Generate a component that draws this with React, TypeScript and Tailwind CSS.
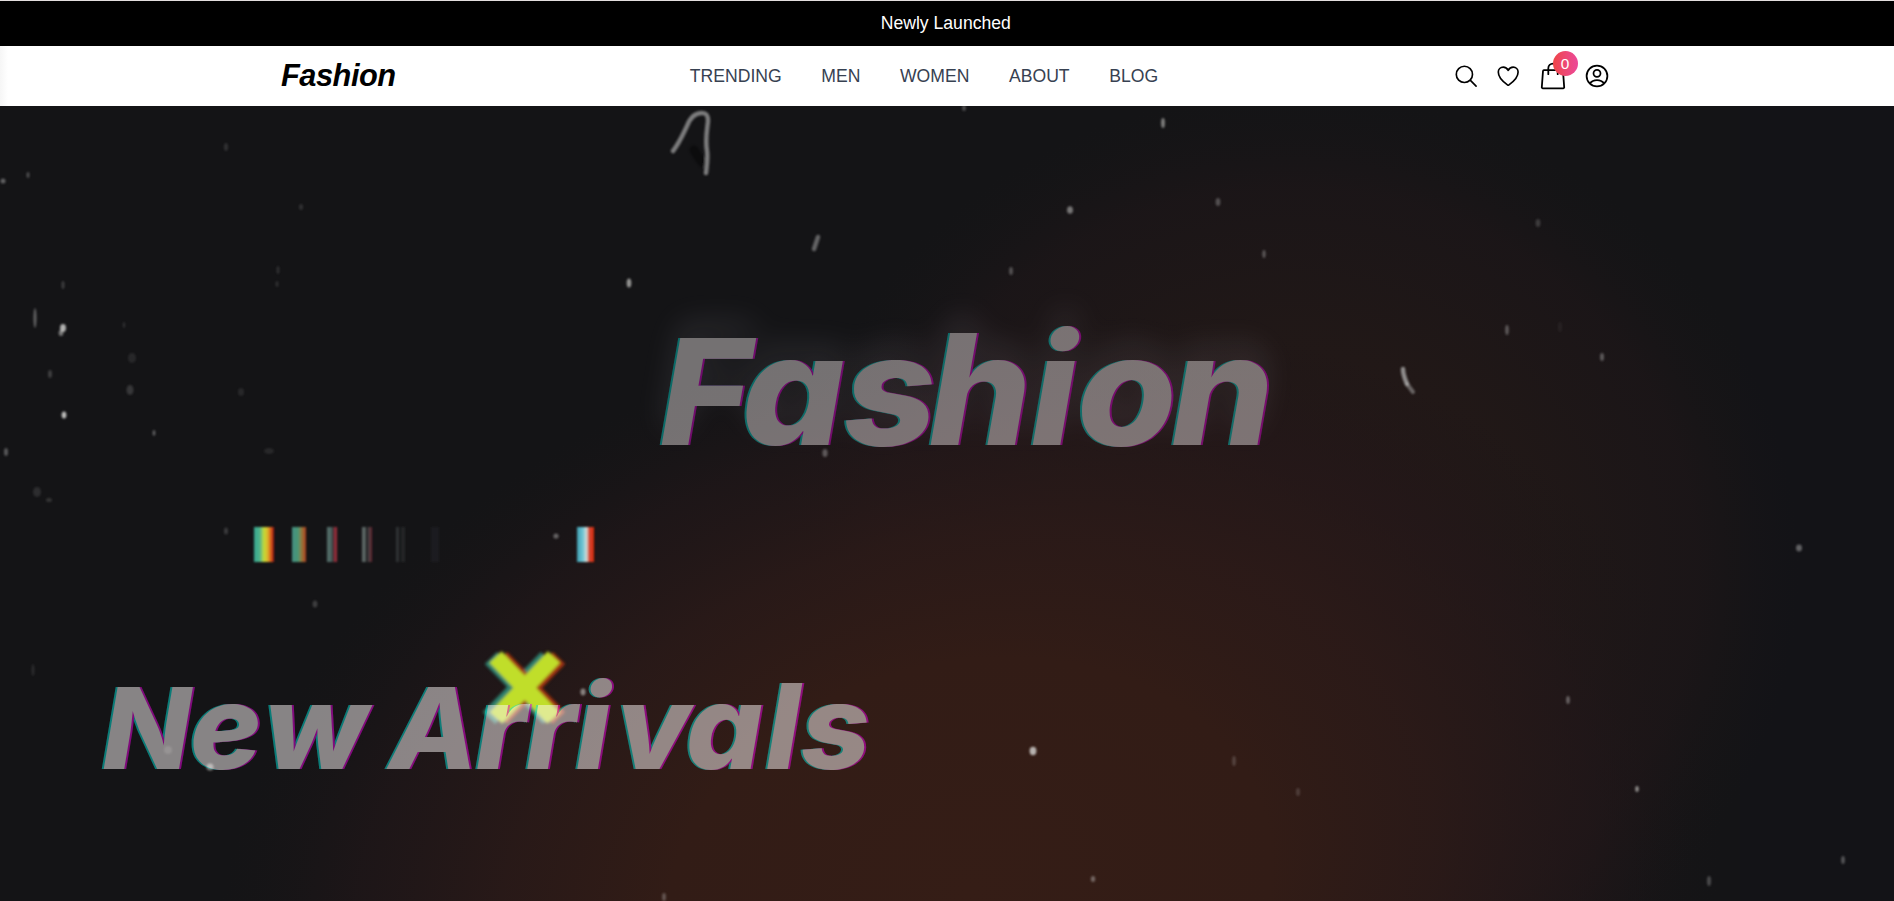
import { IoHeartOutline, IoSearchOutline } from "react-icons/io5";

const links = ["TRENDING", "MEN", "WOMEN", "ABOUT", "BLOG"];

// Dust specks of the film overlay: [x, y, rx, ry, opacity]
const specks: number[][] = [
  [3, 181, 2.5, 2.5, 0.4], [28, 175, 1.5, 3, 0.3], [226, 147, 2, 4, 0.15], [301, 207, 2, 3, 0.15],
  [278, 270, 1.5, 4, 0.14], [277, 284, 1.5, 3, 0.14], [63, 285, 1.5, 4, 0.22], [35, 318, 1.5, 10, 0.4],
  [63, 328, 3, 4, 0.8], [61, 333, 2.4, 3, 0.5], [124, 325, 1.2, 3, 0.15], [132, 358, 4, 5, 0.1], [50, 374, 2, 4, 0.22],
  [130, 390, 3.5, 5, 0.18], [241, 392, 3, 4, 0.1], [64, 415, 2.4, 3.6, 0.85], [154, 433, 1.4, 3, 0.4],
  [269, 451, 5, 3, 0.1], [6, 452, 2, 4, 0.35], [37, 492, 4, 5, 0.13], [49, 500, 3, 2, 0.16],
  [629, 283, 2.3, 4.5, 0.65], [825, 453, 2.6, 4, 0.35], [964, 108, 1.8, 3, 0.3], [1163, 123, 1.9, 5, 0.55],
  [1070, 210, 3, 3.8, 0.5], [1218, 202, 2.4, 4, 0.3], [1538, 223, 2.4, 4, 0.2], [1264, 254, 1.6, 4, 0.35],
  [1011, 271, 2, 4, 0.3], [1507, 330, 1.8, 5, 0.35], [1602, 357, 2, 4, 0.35], [1560, 327, 2, 5, 0.06],
  [226, 531, 2, 3.5, 0.2], [556, 536, 2.6, 2.6, 0.4], [315, 604, 2.4, 3.6, 0.22], [33, 670, 1.5, 6, 0.12],
  [583, 692, 2.6, 3.4, 0.55], [1799, 548, 3, 3.4, 0.4], [1568, 700, 1.8, 4, 0.4], [1033, 751, 3.4, 4.2, 0.8],
  [1234, 761, 1.8, 5, 0.22], [1298, 792, 2, 4, 0.18], [1637, 789, 1.8, 3, 0.6], [1093, 879, 2.2, 3, 0.4],
  [1843, 860, 1.8, 4, 0.35], [1709, 881, 2, 5, 0.28], [664, 897, 2, 4, 0.3], [168, 750, 4, 4, 0.16], [210, 767, 3.5, 3.5, 0.55],
];

const bars = [
  { x: 254, w: 20, fill: "url(#barA)", o: 1 },
  { x: 292, w: 14, fill: "url(#barB)", o: 0.9 },
  { x: 327, w: 10, fill: "url(#barC)", o: 0.75 },
  { x: 362, w: 10, fill: "url(#barD)", o: 0.7 },
  { x: 396, w: 3, fill: "#5a5e60", o: 0.4 },
  { x: 401, w: 4, fill: "#4a4d50", o: 0.3 },
  { x: 431, w: 8, fill: "#3a3a44", o: 0.22 },
  { x: 577, w: 17, fill: "url(#barE)", o: 1 },
];

type TitleProps = {
  text: string;
  y: number;
  capSize: number;
  lowSize: number;
  stretch: number;
  xs: number[];
  opacity: number;
  filter: string;
};

function GlitchTitle({ text, y, capSize, lowSize, stretch, xs, opacity, filter }: TitleProps) {
  const runs: { chars: string; start: number }[] = [];
  for (const m of text.matchAll(/[A-Z]|[^A-Z]+/g)) {
    runs.push({ chars: m[0], start: m.index });
  }
  return (
    <g opacity={opacity} filter={filter} fontFamily="Inter, sans-serif" fontWeight={800} fontStyle="italic" fill="#fff8f8">
      <text transform={`scale(${stretch} 1)`} y={y}>
        {runs.map(({ chars, start }) => (
          <tspan
            key={start}
            x={xs.slice(start, start + chars.length).map((v) => (v / stretch).toFixed(2)).join(" ")}
            fontSize={/[A-Z]/.test(chars) ? capSize : lowSize}
          >
            {chars}
          </tspan>
        ))}
      </text>
    </g>
  );
}

const fashionXs = [660, 742, 844, 929, 1031, 1077, 1171.5];
const arrivalsXs = [102.5, 190, 264, 357, 389, 476, 526, 576, 616, 686, 766, 801];

function BagIcon() {
  return (
    <svg className="size-[28px]" viewBox="0 0 28 28" fill="none" stroke="currentColor" strokeWidth="1.8" strokeLinecap="round" strokeLinejoin="round">
      <path d="M4.9 8.2h18.2a.9.9 0 0 1 .9.8l1.2 16.2a1 1 0 0 1-1 1.1H3.8a1 1 0 0 1-1-1.1L4 9a.9.9 0 0 1 .9-.8Z" />
      <path d="M9.3 12.2V6.3a4.7 4.7 0 0 1 9.4 0v5.9" />
    </svg>
  );
}

function AccountIcon() {
  return (
    <svg className="size-[26px]" viewBox="0 0 26 26" fill="none" stroke="currentColor" strokeWidth="1.75">
      <circle cx="13" cy="13" r="10.4" />
      <circle cx="13" cy="10.3" r="3.5" />
      <path d="M5.9 20.4c1.5-2 4.1-3.3 7.1-3.3s5.6 1.3 7.1 3.3" />
    </svg>
  );
}

export default function App() {
  return (
    <div className="flex h-screen flex-col overflow-hidden bg-black font-['Liberation_Sans',sans-serif]">
      <div className="flex h-[46px] shrink-0 items-center justify-center border-t border-[#e3dede] bg-black pr-[2.4px] text-[17.6px] text-white">
        Newly Launched
      </div>

      <header className="h-[60px] shrink-0 bg-white bg-linear-to-r from-[#f6f6f6] to-white to-[8px]">
        <div className="mx-auto flex h-full w-[1330px] items-center justify-between pr-[2.4px]">
          <a className="-ml-px text-[30.8px] leading-none font-bold tracking-[-0.5px] text-black italic">Fashion</a>
          <nav className="flex gap-[39.6px] pr-px text-[17.6px] text-[#374151]">
            {links.map((l) => (
              <a key={l}>{l}</a>
            ))}
          </nav>
          <div className="flex items-center text-black">
            <IoSearchOutline className="size-[26.4px]" />
            <IoHeartOutline className="ml-[15.5px] size-[26.4px]" />
            <div className="relative ml-[17px]">
              <BagIcon />
              <span className="absolute -top-[11px] left-[14px] flex size-[25px] items-center justify-center rounded-full bg-linear-to-r from-[#ef4444] to-[#ec4899] text-[15.4px] text-white">
                0
              </span>
            </div>
            <div className="ml-[17px]">
              <AccountIcon />
            </div>
          </div>
        </div>
      </header>

      <main className="min-h-0 flex-1 bg-[#141416]">
        <svg className="block h-full w-full [font-feature-settings:'cv11']" viewBox="0 106 1894 795" preserveAspectRatio="xMidYMin slice">
          <defs>
            <radialGradient id="glowLow" gradientUnits="userSpaceOnUse" cx="0" cy="0" r="1" gradientTransform="translate(970 890) rotate(-12) scale(760 570)">
              <stop offset="0" stopColor="#351d16" />
              <stop offset=".4" stopColor="#321c16" />
              <stop offset=".62" stopColor="#2c1a18" stopOpacity=".85" />
              <stop offset=".82" stopColor="#231719" stopOpacity=".6" />
              <stop offset="1" stopColor="#1a1517" stopOpacity="0" />
            </radialGradient>
            <radialGradient id="glowHigh" gradientUnits="userSpaceOnUse" cx="0" cy="0" r="1" gradientTransform="translate(1290 570) scale(510 480)">
              <stop offset="0" stopColor="#291917" />
              <stop offset=".5" stopColor="#211817" stopOpacity=".95" />
              <stop offset=".8" stopColor="#1d1618" stopOpacity=".75" />
              <stop offset="1" stopColor="#171517" stopOpacity="0" />
            </radialGradient>
            <linearGradient id="barA">
              <stop offset="0" stopColor="#35a58e" />
              <stop offset=".3" stopColor="#4fb58c" />
              <stop offset=".5" stopColor="#c3dc35" />
              <stop offset=".68" stopColor="#dcb52a" />
              <stop offset=".85" stopColor="#d9531c" />
              <stop offset="1" stopColor="#8e1410" />
            </linearGradient>
            <linearGradient id="barB">
              <stop offset="0" stopColor="#4a9d8f" />
              <stop offset=".45" stopColor="#4fa67f" />
              <stop offset=".65" stopColor="#9c8a44" />
              <stop offset="1" stopColor="#c4401c" />
            </linearGradient>
            <linearGradient id="barC">
              <stop offset="0" stopColor="#6f8f89" />
              <stop offset=".4" stopColor="#5c7f79" />
              <stop offset=".6" stopColor="#40383c" />
              <stop offset=".85" stopColor="#c73447" />
            </linearGradient>
            <linearGradient id="barD">
              <stop offset="0" stopColor="#7d8b88" />
              <stop offset=".25" stopColor="#7d8b88" />
              <stop offset=".45" stopColor="#1d1d20" />
              <stop offset=".7" stopColor="#5b5558" />
              <stop offset="1" stopColor="#8e2230" />
            </linearGradient>
            <linearGradient id="barE">
              <stop offset="0" stopColor="#3f9db0" />
              <stop offset=".35" stopColor="#6fc6d6" />
              <stop offset=".58" stopColor="#d8dcd6" />
              <stop offset=".68" stopColor="#d2503a" />
              <stop offset="1" stopColor="#d8260c" />
            </linearGradient>
            <filter id="soft" x="-20%" y="-20%" width="140%" height="140%"><feGaussianBlur stdDeviation="0.9" /></filter>
            <filter id="soft2" x="-30%" y="-30%" width="160%" height="160%"><feGaussianBlur stdDeviation="1.8" /></filter>
            <filter id="glitchHaze" x="-15%" y="-60%" width="130%" height="220%" colorInterpolationFilters="sRGB">
              <feOffset in="SourceAlpha" dy="-17" result="up" />
              <feGaussianBlur in="up" stdDeviation="16" result="cloud" />
              <feFlood floodColor="#eeeaff" floodOpacity=".24" />
              <feComposite in2="cloud" operator="in" result="haze" />
              <feOffset in="SourceAlpha" dx="-2.2" result="left" />
              <feFlood floodColor="#00e6dc" />
              <feComposite in2="left" operator="in" result="cyan" />
              <feOffset in="SourceAlpha" dx="2.2" result="right" />
              <feFlood floodColor="#f000e6" />
              <feComposite in2="right" operator="in" result="magenta" />
              <feMerge>
                <feMergeNode in="haze" />
                <feMergeNode in="cyan" />
                <feMergeNode in="magenta" />
                <feMergeNode in="SourceGraphic" />
              </feMerge>
            </filter>
            <filter id="glitch" x="-5%" y="-5%" width="110%" height="110%" colorInterpolationFilters="sRGB">
              <feOffset in="SourceAlpha" dx="-1.6" result="left" />
              <feFlood floodColor="#00e6dc" />
              <feComposite in2="left" operator="in" result="cyan" />
              <feOffset in="SourceAlpha" dx="1.6" result="right" />
              <feFlood floodColor="#f000e6" />
              <feComposite in2="right" operator="in" result="magenta" />
              <feMerge>
                <feMergeNode in="cyan" />
                <feMergeNode in="magenta" />
                <feMergeNode in="SourceGraphic" />
              </feMerge>
            </filter>
          </defs>

          <rect y="106" width="1894" height="795" fill="#141416" />
          <rect x="1740" y="106" width="154" height="795" fill="#131218" opacity=".7" />
          <rect y="106" width="1894" height="795" fill="url(#glowHigh)" />
          <rect y="106" width="1894" height="795" fill="url(#glowLow)" />

          <g filter="url(#soft)">
            {bars.map((b) => (
              <rect key={b.x} x={b.x} y="527" width={b.w} height="35" fill={b.fill} opacity={b.o} />
            ))}
          </g>

          <g fill="#d8d8d6" filter="url(#soft)">
            {specks.map(([x, y, rx, ry, o]) => (
              <ellipse key={`${x}-${y}`} cx={x} cy={y} rx={rx} ry={ry} opacity={o} />
            ))}
          </g>
          <g fill="none" stroke="#b4b4b4" strokeLinecap="round" strokeLinejoin="round" filter="url(#soft)">
            <path d="M694 150c4 7 6 10 9 13" stroke="#08080a" strokeWidth="9" opacity=".4" />
            <path d="M673 151c7-9 10-17 14-25 3-8 8-13 15-13 5 0 6 3 6 8-1 10-3 18-1 30 1 7 0 13-1 22" strokeWidth="4.5" opacity=".65" />
            <path d="M818 237l-4 12" strokeWidth="4.5" opacity=".5" />
            <path d="M1403 369c0 6 2 10 4 15" strokeWidth="4.5" opacity=".75" />
            <path d="M1407 384l6 8" strokeWidth="4" opacity=".5" />
          </g>

          <g strokeWidth="17" fill="none" filter="url(#soft2)">
            <path d="M491 658l58 60M547 658l-58 60" stroke="#2f9c86" opacity=".8" />
            <path d="M501 658l58 60M559 658l-58 60" stroke="#c23a10" opacity=".8" />
            <path d="M495.5 657l58 61M554 657l-58 61" stroke="#c0de2a" />
          </g>

          <GlitchTitle text="Fashion" y={445} capSize={147} lowSize={154} stretch={1.045} xs={fashionXs} opacity={0.41} filter="url(#glitchHaze)" />
          <GlitchTitle text="New Arrivals" y={769} capSize={113} lowSize={118} stretch={1.02} xs={arrivalsXs} opacity={0.49} filter="url(#glitch)" />
        </svg>
      </main>
    </div>
  );
}
